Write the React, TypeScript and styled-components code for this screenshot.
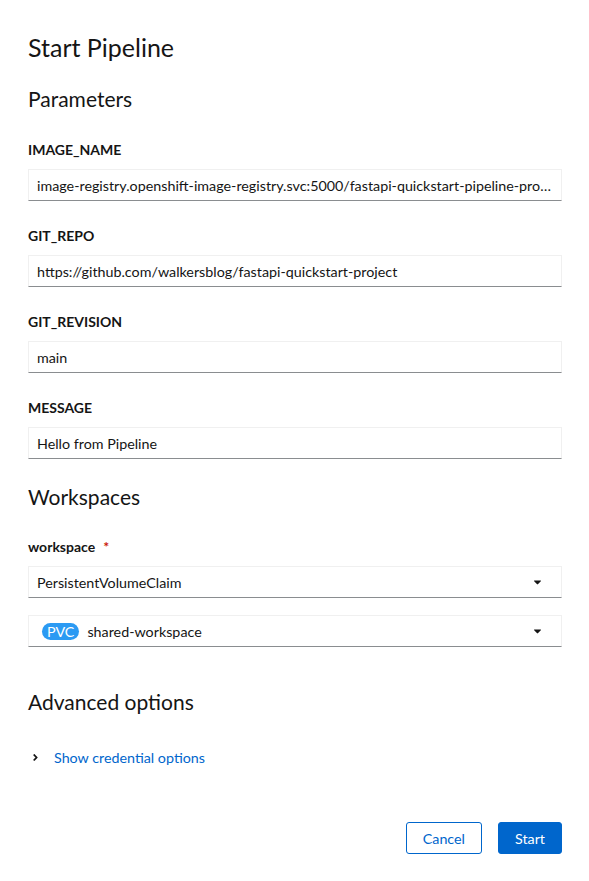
import styled, { createGlobalStyle } from 'styled-components';

const GlobalStyle = createGlobalStyle`
  html, body {
    margin: 0;
    padding: 0;
    background: #fff;
  }
  body {
    font-family: Lato, "Noto Sans", sans-serif;
    color: #151515;
  }
`;

const Page = styled.div`
  width: 589px;
  box-sizing: border-box;
  padding: 31px 27px 26px 28px;
  display: flex;
  flex-direction: column;
`;

const Title = styled.h1`
  margin: 0;
  font-size: 25px;
  line-height: 32px;
  font-weight: 400;
`;

const SectionTitle = styled.h2<{ $top: number }>`
  margin: ${p => p.$top}px 0 0;
  font-size: 21px;
  line-height: 26px;
  font-weight: 400;
`;

const Field = styled.div<{ $top: number }>`
  margin-top: ${p => p.$top}px;
  display: flex;
  flex-direction: column;
  gap: 10px;
`;

const Label = styled.label`
  font-size: 14px;
  line-height: 18px;
  font-weight: 700;
  display: flex;
  gap: 8px;
`;

const Required = styled.span`
  color: #c9190b;
`;

const TextInput = styled.input`
  height: 32px;
  flex-shrink: 0;
  box-sizing: border-box;
  width: 100%;
  padding: 0 8px;
  border: 1px solid #f0f0f0;
  border-bottom-color: #8a8d90;
  font-family: inherit;
  font-size: 14.3px;
  color: #151515;
  background: #fff;
  text-overflow: ellipsis;
  outline: none;
`;

const Select = styled.div<{ $top?: number }>`
  margin-top: ${p => p.$top ?? 0}px;
  height: 32px;
  flex-shrink: 0;
  box-sizing: border-box;
  display: flex;
  align-items: center;
  gap: 8px;
  padding: 0 18px 0 8px;
  border: 1px solid #f0f0f0;
  border-bottom-color: #8a8d90;
  font-size: 14.3px;
`;

const SelectText = styled.span`
  flex: 1;
  display: flex;
  align-items: center;
  gap: 8px;
`;

const Badge = styled.span`
  background: #2b9af3;
  color: #fff;
  border-radius: 9px;
  padding: 0 5px;
  font-size: 14.3px;
  line-height: 17px;
  margin-left: 5px;
`;

const Caret = styled.svg`
  width: 11px;
  height: 12px;
`;

const Toggle = styled.button`
  margin-top: 34px;
  align-self: flex-start;
  display: flex;
  align-items: center;
  gap: 14px;
  padding: 0 0 0 3px;
  background: none;
  border: none;
  font-family: inherit;
  font-size: 14.3px;
  color: #0066cc;
  cursor: pointer;
`;

const Footer = styled.div`
  margin-top: 56px;
  display: flex;
  justify-content: flex-end;
  gap: 16px;
`;

const Button = styled.button<{ $primary?: boolean }>`
  height: 32px;
  padding: 0 16px;
  border-radius: 3px;
  font-family: inherit;
  font-size: 14.3px;
  cursor: pointer;
  border: 1px solid #0066cc;
  background: ${p => (p.$primary ? '#0066cc' : '#fff')};
  color: ${p => (p.$primary ? '#fff' : '#0066cc')};
`;

const params = [
  {
    name: 'IMAGE_NAME',
    value:
      'image-registry.openshift-image-registry.svc:5000/fastapi-quickstart-pipeline-project/fastapi-quickstart',
  },
  { name: 'GIT_REPO', value: 'https://github.com/walkersblog/fastapi-quickstart-project' },
  { name: 'GIT_REVISION', value: 'main' },
  { name: 'MESSAGE', value: 'Hello from Pipeline' },
];

const CaretDown = () => (
  <Caret viewBox="0 0 320 512">
    <path
      fill="#151515"
      d="M31.3 192h257.3c17.8 0 26.7 21.5 14.1 34.1L174.1 354.8c-7.8 7.8-20.5 7.8-28.3 0L17.2 226.1C4.6 213.5 13.5 192 31.3 192z"
    />
  </Caret>
);

export default function App() {
  return (
    <>
      <GlobalStyle />
      <Page>
        <Title>Start Pipeline</Title>
        <SectionTitle $top={23}>Parameters</SectionTitle>
        {params.map((p, i) => (
          <Field key={p.name} $top={i === 0 ? 29 : 26}>
            <Label htmlFor={p.name}>{p.name}</Label>
            <TextInput id={p.name} defaultValue={p.value} />
          </Field>
        ))}
        <SectionTitle $top={25}>Workspaces</SectionTitle>
        <Field $top={28}>
          <Label>
            workspace <Required>*</Required>
          </Label>
          <Select>
            <SelectText>PersistentVolumeClaim</SelectText>
            <CaretDown />
          </Select>
        </Field>
        <Select $top={17}>
          <SelectText>
            <Badge>PVC</Badge>
            shared-workspace
          </SelectText>
          <CaretDown />
        </Select>
        <SectionTitle $top={42}>Advanced options</SectionTitle>
        <Toggle type="button">
          <svg width="9" height="11" viewBox="0 0 256 512">
            <path
              fill="#151515"
              d="M224.3 273l-136 136c-9.4 9.4-24.6 9.4-33.9 0l-22.6-22.6c-9.4-9.4-9.4-24.6 0-33.9l96.4-96.4-96.4-96.4c-9.4-9.4-9.4-24.6 0-33.9L54.3 103c9.4-9.4 24.6-9.4 33.9 0l136 136c9.5 9.4 9.5 24.6.1 34z"
            />
          </svg>
          Show credential options
        </Toggle>
        <Footer>
          <Button type="button">Cancel</Button>
          <Button type="button" $primary>
            Start
          </Button>
        </Footer>
      </Page>
    </>
  );
}
